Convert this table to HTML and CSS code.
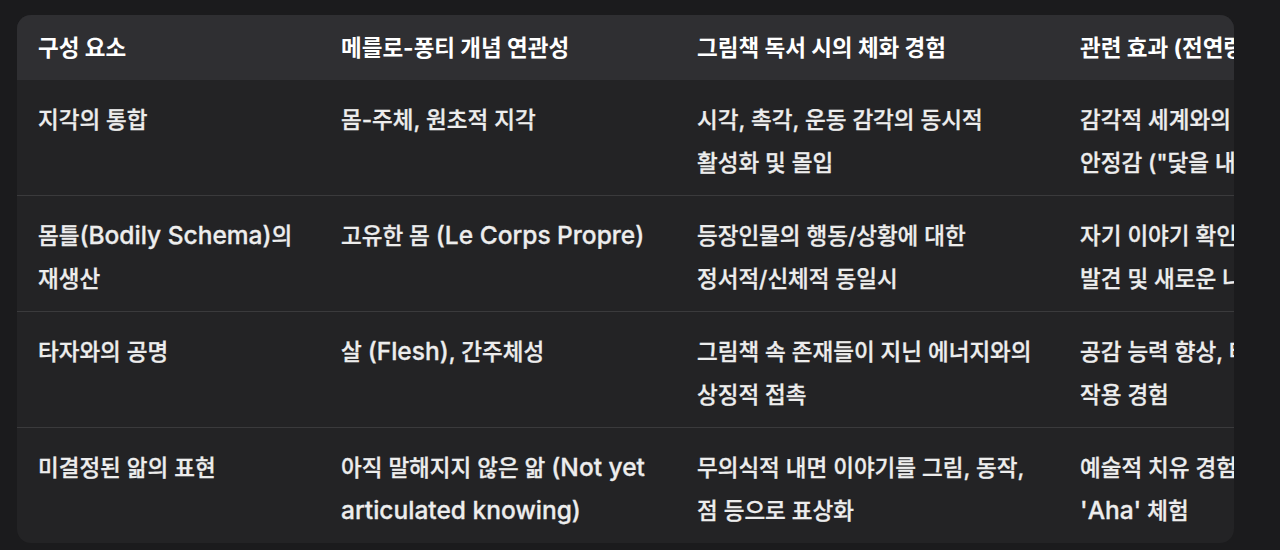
FILE: index.html
```html
<!DOCTYPE html>
<html lang="ko">
<head>
<meta charset="utf-8">
<title>메를로-퐁티 개념과 그림책 독서</title>
<link rel="stylesheet" href="styles.css">
</head>
<body>
<div class="table-wrap">
  <table class="concept-table">
    <colgroup>
      <col class="c1"><col class="c2"><col class="c3"><col class="c4">
    </colgroup>
    <thead>
      <tr>
        <th>구성 요소</th>
        <th>메를로-퐁티 개념 연관성</th>
        <th>그림책 독서 시의 체화 경험</th>
        <th>관련 효과 (전연령 대상)</th>
      </tr>
    </thead>
    <tbody>
      <tr>
        <td>지각의 통합</td>
        <td>몸-주체, 원초적 지각</td>
        <td>시각, 촉각, 운동 감각의 동시적 활성화 및 몰입</td>
        <td>감각적 세계와의 정서적 연결과<br>안정감 ("닻을 내리는" 느낌)</td>
      </tr>
      <tr>
        <td>몸틀<span class="lat">(Bodily Schema)</span>의 재생산</td>
        <td>고유한 몸 <span class="lat">(Le Corps Propre)</span></td>
        <td>등장인물의 행동/상황에 대한 정서적/신체적 동일시</td>
        <td>자기 이야기 확인 및 정체성의<br>발견 및 새로운 나의 구성</td>
      </tr>
      <tr>
        <td>타자와의 공명</td>
        <td>살 <span class="lat">(Flesh)</span>, 간주체성</td>
        <td>그림책 속 존재들이 지닌 에너지와의 상징적 접촉</td>
        <td>공감 능력 향상, 타자와의 상호<br>작용 경험</td>
      </tr>
      <tr>
        <td>미결정된 앎의 표현</td>
        <td>아직 말해지지 않은 앎 <span class="lat">(Not yet articulated knowing)</span></td>
        <td>무의식적 내면 이야기를 그림, 동작, 점 등으로 표상화</td>
        <td>예술적 치유 경험 및 내적 통찰의<br><span class="lat">'Aha'</span> 체험</td>
      </tr>
    </tbody>
  </table>
</div>
</body>
</html>
```
FILE: styles.css
```css
html, body {
  margin: 0;
  background: #1b1b1d;
}
body {
  padding: 15px 0 0 17px;
  font-family: Inter, "Noto Sans CJK KR", sans-serif;
  color: #ededed;
}
.table-wrap {
  width: 1217px;
  overflow: hidden;
  border-radius: 14px;
  background: #232325;
}
.concept-table {
  border-collapse: collapse;
  table-layout: fixed;
  width: 1467px;
  font-size: 22.5px;
  line-height: 43px;
  word-break: keep-all;
}
.c1 { width: 303px; }
.c2 { width: 356px; }
.c3 { width: 383px; }
.c4 { width: 425px; }
.concept-table th {
  background: #2f2f32;
  color: #ffffff;
  font-weight: 700;
  text-align: left;
  padding: 11px 21px;
  white-space: nowrap;
}
.concept-table td {
  vertical-align: top;
  padding: 18px 21px 11px;
  font-weight: 500;
  -webkit-text-stroke: 0.3px currentColor;
  border-top: 1px solid #3a3a3c;
}
.concept-table tbody tr:first-child td {
  border-top: none;
}
.lat {
  font-size: 1.09em;
  line-height: 0;
}
```
